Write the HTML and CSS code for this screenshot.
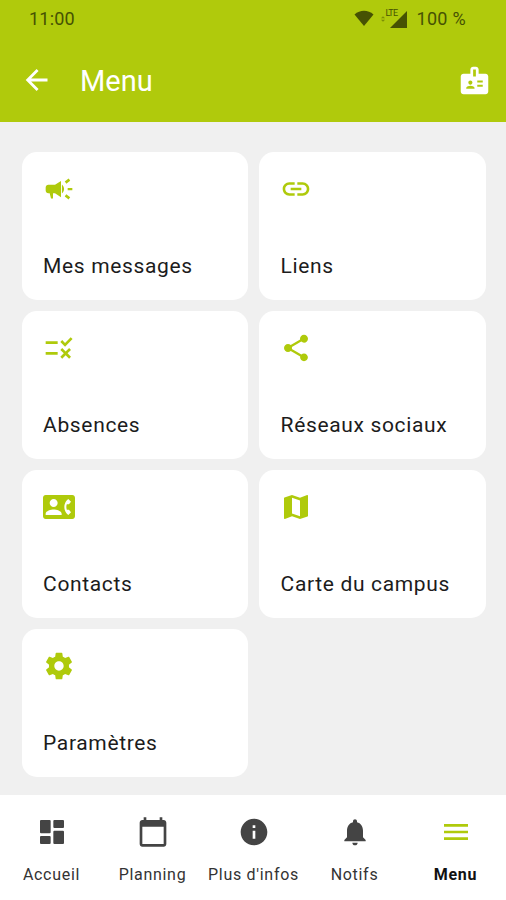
FILE: index.html
```
<!DOCTYPE html>
<html lang="fr">
	<head>
		<meta charset="utf-8">
		<title>Menu</title>
		<link rel="stylesheet" href="styles.css">
	</head>
	<body>
	<header class="header">
		<div class="status">
			<span class="time">11:00</span>
			<svg class="wifi" viewBox="0 0 20 17"><path d="M0.5 4.500C6-.4 14-.4 19.500 4.500L10 16z"/></svg>
			<div class="signal">
				<span class="lte">LTE</span>
				<svg class="arrows" viewBox="0 0 5 9"><path d="M0 3.500L2.500 1 5 3.500zM0 5.500h5L2.500 8z"/></svg>
				<svg class="bars" viewBox="0 0 17 17"><path d="M0 17L17 0v17z"/></svg>
			</div>
			<span class="battery">100 %</span>
		</div>
		<div class="toolbar">
			<svg class="back" viewBox="0 0 24 24"><path d="M21 12H4.500M12.500 3.500L4 12l8.500 8.500"/></svg>
			<h1 class="title">Menu</h1>
			<svg class="badge" viewBox="0 0 24 24"><path fill-rule="evenodd" d="M20 7h-5V4c0-1.100-.9-2-2-2h-2c-1.100 0-2 .9-2 2v3H4c-1.100 0-2 .9-2 2v11c0 1.100.9 2 2 2h16c1.100 0 2-.9 2-2V9c0-1.100-.9-2-2-2zM9 12c.83 0 1.500.67 1.500 1.500S9.830 15 9 15s-1.500-.67-1.500-1.500S8.170 12 9 12zm3 6H6v-.75c0-1 2-1.500 3-1.500s3 .5 3 1.500V18zm1-9h-2V4h2v5zm5 7.500h-4V15h4v1.500zm0-3h-4V12h4v1.500z"/></svg>
		</div>
	</header>
	<main class="cards">
		<a class="card">
			<svg class="icon" viewBox="0 0 24 24"><path d="M18.500 11.200v1.800H22v-1.800h-3.500zM16.300 17.610c.96.71 2 1.500 2.900 2.190.4-.53.8-1.070 1.200-1.600-.99-.74-1.940-1.480-2.900-2.200-.4.540-.8 1.080-1.200 1.610zM20.400 5.800c-.4-.53-.8-1.070-1.200-1.600-.99.74-1.940 1.480-2.900 2.200.4.530.8 1.070 1.200 1.600.96-.72 1.910-1.450 2.900-2.200zM4 8.800c-1.100 0-2 .9-2 2v2.400c0 1.100.9 2 2 2h1l1 4h1.500v-4H9l4.500 3V6L9 8.800H4zM15.800 12c0-1.330-.68-2.530-1.600-3.350v6.690c.92-.81 1.600-2.010 1.600-3.340z"/></svg>
			<span>Mes messages</span>
		</a>
		<a class="card">
			<svg class="icon" viewBox="0 0 24 24"><path d="M3.900 12c0-1.710 1.390-3.100 3.100-3.100h4V7H7c-2.760 0-5 2.240-5 5s2.240 5 5 5h4v-1.900H7c-1.710 0-3.100-1.390-3.100-3.100zM8 13h8v-2H8v2zm9-6h-4v1.900h4c1.710 0 3.100 1.390 3.100 3.100s-1.390 3.100-3.100 3.100h-4V17h4c2.760 0 5-2.240 5-5s-2.240-5-5-5z"/></svg>
			<span>Liens</span>
		</a>
		<a class="card">
			<svg class="icon" viewBox="0 0 24 24"><path d="M16.540 11L13 7.460l1.410-1.410 2.120 2.120 4.240-4.240 1.410 1.410L16.540 11zM11 7H2v2h9V7zM21 13.410L19.590 12 17 14.590 14.410 12 13 13.410 15.590 16 13 18.590 14.410 20 17 17.410 19.590 20 21 18.590 18.410 16 21 13.410zM11 15H2v2h9v-2z"/></svg>
			<span>Absences</span>
		</a>
		<a class="card">
			<svg class="icon" viewBox="0 0 24 24"><path d="M18 16.080c-.76 0-1.440.3-1.960.77L8.910 12.700c.05-.23.090-.46.090-.7s-.04-.47-.09-.7l7.050-4.110c.54.5 1.250.81 2.040.81 1.660 0 3-1.340 3-3s-1.340-3-3-3-3 1.340-3 3c0 .24.040.47.090.7L8.040 9.810C7.500 9.310 6.790 9 6 9c-1.660 0-3 1.340-3 3s1.340 3 3 3c.79 0 1.500-.31 2.040-.81l7.120 4.160c-.05.210-.08.430-.08.650 0 1.610 1.310 2.920 2.920 2.920s2.920-1.310 2.920-2.920-1.310-2.920-2.920-2.920z"/></svg>
			<span>Réseaux sociaux</span>
		</a>
		<a class="card">
			<svg class="icon" viewBox="0 0 24 24"><path d="M22 3H2C.9 3 0 3.900 0 5v14c0 1.100.9 2 2 2h20c1.100 0 1.990-.9 1.990-2L24 5c0-1.100-.9-2-2-2zM8 6c1.660 0 3 1.340 3 3s-1.340 3-3 3-3-1.340-3-3 1.340-3 3-3zm6 12H2v-1c0-2 4-3.100 6-3.100s6 1.100 6 3.100v1zm3.850-4h1.640L21 16l-1.990 1.990c-1.310-.98-2.280-2.380-2.730-3.990-.18-.64-.28-1.310-.28-2s.1-1.360.28-2c.45-1.620 1.420-3.010 2.730-3.990L21 8l-1.510 2h-1.640c-.22.630-.35 1.300-.35 2s.13 1.370.35 2z"/></svg>
			<span>Contacts</span>
		</a>
		<a class="card">
			<svg class="icon" viewBox="0 0 24 24"><path d="M20.500 3l-.16.030L15 5.100 9 3 3.360 4.900c-.21.070-.36.250-.36.480V20.500c0 .28.220.5.500.5l.16-.03L9 18.900l6 2.100 5.640-1.900c.21-.07.360-.25.360-.48V3.500c0-.28-.22-.5-.5-.5zM15 19l-6-2.110V5l6 2.110V19z"/></svg>
			<span>Carte du campus</span>
		</a>
		<a class="card">
			<svg class="icon" viewBox="0 0 24 24"><path d="M19.430 12.980c.04-.32.070-.64.070-.98s-.03-.66-.07-.98l2.110-1.650c.19-.15.240-.42.120-.64l-2-3.460c-.12-.22-.39-.3-.61-.22l-2.490 1c-.52-.4-1.080-.73-1.690-.98l-.38-2.650C14.460 2.180 14.250 2 14 2h-4c-.25 0-.46.180-.49.420l-.38 2.650c-.61.250-1.170.59-1.690.98l-2.490-1c-.23-.09-.49 0-.61.220l-2 3.460c-.13.220-.07.490.12.640l2.110 1.650c-.04.320-.07.650-.07.980s.03.660.07.980l-2.110 1.650c-.19.150-.24.420-.12.640l2 3.460c.12.220.39.300.61.220l2.490-1c.52.4 1.080.73 1.690.98l.38 2.650c.03.240.24.420.49.420h4c.25 0 .46-.18.490-.42l.38-2.650c.61-.25 1.170-.59 1.690-.98l2.490 1c.23.09.49 0 .61-.22l2-3.460c.12-.22.070-.49-.12-.64l-2.110-1.650zM12 15.500c-1.930 0-3.500-1.570-3.500-3.500s1.570-3.500 3.500-3.500 3.500 1.570 3.500 3.500-1.570 3.500-3.500 3.500z"/></svg>
			<span>Paramètres</span>
		</a>
	</main>
	<nav class="nav">
		<a class="tab">
			<svg class="icon" viewBox="0 0 24 24">
				<rect x="3" y="3" width="8" height="10" rx="0.8"/>
				<rect x="3" y="15" width="8" height="6" rx="0.8"/>
				<rect x="13" y="11" width="8" height="10" rx="0.8"/>
				<rect x="13" y="3" width="8" height="6" rx="0.8"/>
			</svg>
			<span>Accueil</span>
		</a>
		<a class="tab">
			<svg class="icon" viewBox="0 0 24 24"><path d="M20 3h-1V1h-2v2H7V1H5v2H4c-1.100 0-2 .9-2 2v16c0 1.100.9 2 2 2h16c1.100 0 2-.9 2-2V5c0-1.100-.9-2-2-2zm0 18H4V8h16v13z"/></svg>
			<span>Planning</span>
		</a>
		<a class="tab">
			<svg class="icon" viewBox="0 0 24 24"><path d="M12 2C6.480 2 2 6.480 2 12s4.480 10 10 10 10-4.480 10-10S17.520 2 12 2zm1 15h-2v-6h2v6zm0-8h-2V7h2v2z"/></svg>
			<span>Plus d'infos</span>
		</a>
		<a class="tab">
			<svg class="icon" viewBox="0 0 24 24"><path d="M12 22c1.100 0 2-.9 2-2h-4c0 1.100.89 2 2 2zm6-6v-5c0-3.070-1.640-5.640-4.500-6.320V4c0-.83-.67-1.500-1.500-1.500s-1.500.67-1.500 1.500v.68C7.630 5.360 6 7.920 6 11v5l-2 2v1h16v-1l-2-2z"/></svg>
			<span>Notifs</span>
		</a>
		<a class="tab active">
			<svg class="icon" viewBox="0 0 24 24"><path d="M3 18h18v-2H3v2zm0-5h18v-2H3v2zm0-7v2h18V6H3z"/></svg>
			<span>Menu</span>
		</a>
	</nav>
	</body>
</html>
```
FILE: styles.css
```
* {
	box-sizing: border-box;
}
body {
	margin: 0;
	height: 900px;
	display: flex;
	flex-direction: column;
	background: #f0f0f0;
	font-family: Roboto, "Liberation Sans", sans-serif;
	overflow: hidden;
}
svg {
	display: block;
	flex: none;
	fill: currentColor;
}
.header {
	height: 122px;
	background: #b0ca0c;
	color: #fff;
}
.status {
	display: flex;
	align-items: center;
	height: 37px;
	padding: 0 40px 0 29px;
	font-size: 18px;
	color: #465203;
}
.time {
	margin-right: auto;
	letter-spacing: 0.2px;
}
.wifi {
	width: 20px;
	height: 17px;
}
.signal {
	display: flex;
	width: 26px;
	height: 18px;
	margin: 0 10px 0 7px;
	position: relative;
	justify-content: flex-end;
	align-items: flex-end;
}
.lte {
	position: absolute;
	left: 5px;
	top: -1px;
	font-size: 9px;
	line-height: 9px;
	letter-spacing: -0.8px;
}
.arrows {
	position: absolute;
	left: 0;
	top: 5px;
	width: 4px;
	height: 8px;
	opacity: 0.5;
}
.bars {
	width: 17px;
	height: 17px;
}
.battery {
	letter-spacing: 0.3px;
}
.toolbar {
	display: flex;
	align-items: center;
	height: 85px;
	padding: 3px 15px 0 23px;
}
.back {
	width: 28px;
	height: 28px;
	margin-top: -3px;
	fill: none;
	stroke: currentColor;
	stroke-width: 2.4;
}
.title {
	margin: 0 auto 0 29px;
	font-size: 29px;
	font-weight: 400;
}
.badge {
	width: 33px;
	height: 33px;
	margin-top: -2px;
}
.cards {
	flex: 1;
	display: grid;
	grid-template-columns: 226.5px 226.5px;
	grid-auto-rows: 148px;
	gap: 11px;
	padding: 30.4px 20px 0 21.7px;
}
.card {
	display: flex;
	flex-direction: column;
	justify-content: space-between;
	padding: 21px;
	border-radius: 15px;
	background: #fff;
	font-size: 21px;
	line-height: 25px;
	letter-spacing: 0.65px;
	color: #1c1c1c;
}
.card span {
	padding-left: 0.4px;
}
.icon {
	width: 32px;
	height: 32px;
}
.card .icon {
	color: #afca0b;
}
.nav {
	display: flex;
	height: 105px;
	padding-left: 1px;
	background: #fff;
}
.tab {
	flex: 1;
	display: flex;
	flex-direction: column;
	align-items: center;
	gap: 17px;
	padding-top: 21px;
	font-size: 16px;
	line-height: 20px;
	letter-spacing: 0.7px;
	white-space: nowrap;
	color: #333;
}
.tab .icon {
	color: #444;
}
.tab.active {
	font-weight: 700;
	color: #111;
}
.active .icon {
	color: #afca0b;
}
```
